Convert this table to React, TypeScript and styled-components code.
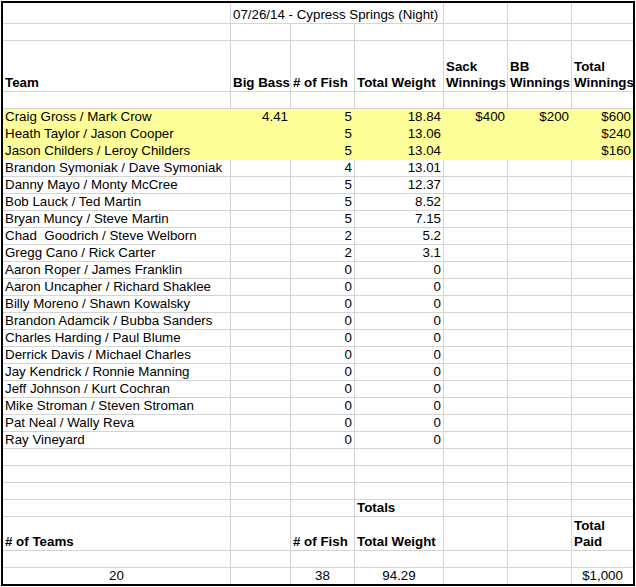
import React from "react";
import styled, { createGlobalStyle } from "styled-components";

const GlobalStyle = createGlobalStyle`
  body {
    margin: 0;
    background: #fff;
  }
`;

const gridLine = "#d4d4d4";
const highlight = "#ffff99";

const Sheet = styled.table`
  margin: 1px 0 0 1px;
  width: 634px;
  box-sizing: border-box;
  border: 2px solid #000;
  border-collapse: separate;
  border-spacing: 0;
  table-layout: fixed;
  font-family: "Liberation Sans", Arial, sans-serif;
  font-size: 13.33px;
  color: #000;
  tr:last-child td {
    border-bottom: none;
  }
  td:last-child {
    border-right: none;
  }
`;

const Row = styled.tr<{ $h?: number }>`
  height: ${(p) => p.$h ?? 17}px;
`;

const Cell = styled.td<{
  $align?: "left" | "right" | "center";
  $bold?: boolean;
  $fill?: boolean;
}>`
  padding: 0 2px;
  vertical-align: bottom;
  line-height: 16px;
  white-space: pre;
  overflow: visible;
  text-align: ${(p) => p.$align ?? "left"};
  font-weight: ${(p) => (p.$bold ? 700 : 400)};
  background: ${(p) => (p.$fill ? highlight : "#fff")};
  border-right: 1px solid ${(p) => (p.$fill ? highlight : gridLine)};
  border-bottom: 1px solid ${(p) => (p.$fill ? highlight : gridLine)};
`;

type Team = {
  name: string;
  bigBass?: string;
  fish: string;
  weight: string;
  sack?: string;
  bb?: string;
  total?: string;
  top?: boolean;
};

const teams: Team[] = [
  { name: "Craig Gross / Mark Crow", bigBass: "4.41", fish: "5", weight: "18.84", sack: "$400", bb: "$200", total: "$600", top: true },
  { name: "Heath Taylor / Jason Cooper", fish: "5", weight: "13.06", total: "$240", top: true },
  { name: "Jason Childers / Leroy Childers", fish: "5", weight: "13.04", total: "$160", top: true },
  { name: "Brandon Symoniak / Dave Symoniak", fish: "4", weight: "13.01" },
  { name: "Danny Mayo / Monty McCree", fish: "5", weight: "12.37" },
  { name: "Bob Lauck / Ted Martin", fish: "5", weight: "8.52" },
  { name: "Bryan Muncy / Steve Martin", fish: "5", weight: "7.15" },
  { name: "Chad  Goodrich / Steve Welborn", fish: "2", weight: "5.2" },
  { name: "Gregg Cano / Rick Carter", fish: "2", weight: "3.1" },
  { name: "Aaron Roper / James Franklin", fish: "0", weight: "0" },
  { name: "Aaron Uncapher / Richard Shaklee", fish: "0", weight: "0" },
  { name: "Billy Moreno / Shawn Kowalsky", fish: "0", weight: "0" },
  { name: "Brandon Adamcik / Bubba Sanders", fish: "0", weight: "0" },
  { name: "Charles Harding / Paul Blume", fish: "0", weight: "0" },
  { name: "Derrick Davis / Michael Charles", fish: "0", weight: "0" },
  { name: "Jay Kendrick / Ronnie Manning", fish: "0", weight: "0" },
  { name: "Jeff Johnson / Kurt Cochran", fish: "0", weight: "0" },
  { name: "Mike Stroman / Steven Stroman", fish: "0", weight: "0" },
  { name: "Pat Neal / Wally Reva", fish: "0", weight: "0" },
  { name: "Ray Vineyard", fish: "0", weight: "0" },
];

const colWidths = [228, 60, 64, 89, 64, 64, 61];

const EmptyRow = ({ h }: { h?: number }) => (
  <Row $h={h}>
    {colWidths.map((_, i) => (
      <Cell key={i} />
    ))}
  </Row>
);

const TeamRow = ({ t }: { t: Team }) => (
  <Row>
    <Cell $fill={t.top}>{t.name}</Cell>
    <Cell $fill={t.top} $align="right">{t.bigBass}</Cell>
    <Cell $fill={t.top} $align="right">{t.fish}</Cell>
    <Cell $fill={t.top} $align="right">{t.weight}</Cell>
    <Cell $fill={t.top} $align="right">{t.sack}</Cell>
    <Cell $fill={t.top} $align="right">{t.bb}</Cell>
    <Cell $fill={t.top} $align="right">{t.total}</Cell>
  </Row>
);

const App = () => {
  return (
    <>
      <GlobalStyle />
      <Sheet>
        <colgroup>
          {colWidths.map((w, i) => (
            <col key={i} style={{ width: w }} />
          ))}
        </colgroup>
        <tbody>
          <Row $h={21}>
            <Cell />
            <Cell colSpan={3}>07/26/14 - Cypress Springs (Night)</Cell>
            <Cell />
            <Cell />
            <Cell />
          </Row>
          <EmptyRow />
          <Row $h={51}>
            <Cell $bold>Team</Cell>
            <Cell $bold>Big Bass</Cell>
            <Cell $bold># of Fish</Cell>
            <Cell $bold>Total Weight</Cell>
            <Cell $bold>{"Sack\nWinnings"}</Cell>
            <Cell $bold>{"BB\nWinnings"}</Cell>
            <Cell $bold>{"Total\nWinnings"}</Cell>
          </Row>
          <EmptyRow />
          {teams.map((t) => (
            <TeamRow key={t.name} t={t} />
          ))}
          <EmptyRow />
          <EmptyRow />
          <EmptyRow />
          <Row>
            <Cell />
            <Cell />
            <Cell />
            <Cell $bold>Totals</Cell>
            <Cell />
            <Cell />
            <Cell />
          </Row>
          <Row $h={34}>
            <Cell $bold># of Teams</Cell>
            <Cell />
            <Cell $bold># of Fish</Cell>
            <Cell $bold>Total Weight</Cell>
            <Cell />
            <Cell />
            <Cell $bold>{"Total\nPaid"}</Cell>
          </Row>
          <EmptyRow />
          <Row $h={16}>
            <Cell $align="center">20</Cell>
            <Cell />
            <Cell $align="center">38</Cell>
            <Cell $align="center">94.29</Cell>
            <Cell />
            <Cell />
            <Cell $align="center">$1,000</Cell>
          </Row>
        </tbody>
      </Sheet>
    </>
  );
};

export default App;
